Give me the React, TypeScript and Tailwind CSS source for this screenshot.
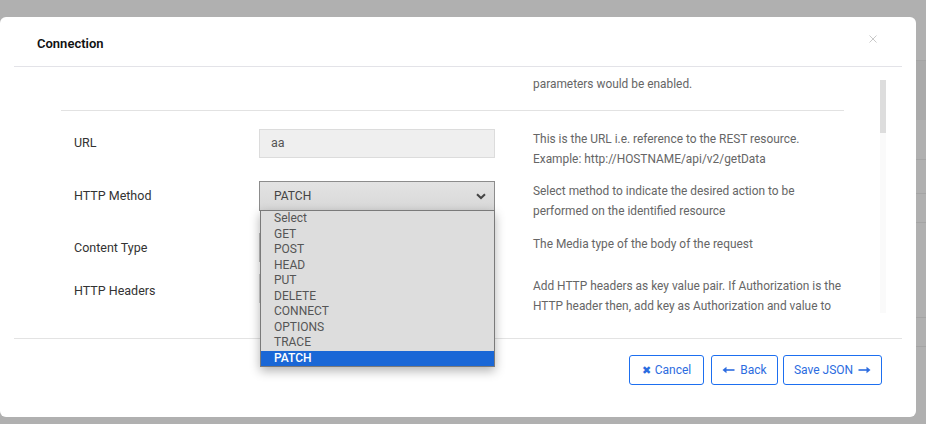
import React from 'react';

const methods = ['Select', 'GET', 'POST', 'HEAD', 'PUT', 'DELETE', 'CONNECT', 'OPTIONS', 'TRACE', 'PATCH'];

function Row({ label, control, desc, labelClass = '' }: { label: string; control: React.ReactNode; desc: React.ReactNode; labelClass?: string }) {
  return (
    <div className="flex items-start">
      <div className={`w-[198px] shrink-0 pl-[13px] text-[12.5px] leading-[27px] text-[#333] ${labelClass}`}>{label}</div>
      <div className="w-[236px] shrink-0">{control}</div>
      <div className="ml-[38px] flex-1 text-[11.9px] leading-[20px] text-[#666]">{desc}</div>
    </div>
  );
}

function Chevron() {
  return (
    <svg width="10" height="7" viewBox="0 0 10 7" className="text-[#444]">
      <path d="M1 1.2 L5 5 L9 1.2" fill="none" stroke="currentColor" strokeWidth="2" />
    </svg>
  );
}

function ArrowLeft() {
  return (
    <svg width="13" height="8" viewBox="0 0 13 8">
      <path d="M12.5 4 H3" stroke="currentColor" strokeWidth="1.6" />
      <path d="M0.5 4 L4.5 0.8 V7.2 Z" fill="currentColor" />
    </svg>
  );
}

function ArrowRight() {
  return (
    <svg width="13" height="8" viewBox="0 0 13 8">
      <path d="M0.5 4 H10" stroke="currentColor" strokeWidth="1.6" />
      <path d="M12.5 4 L8.5 0.8 V7.2 Z" fill="currentColor" />
    </svg>
  );
}

export default function App() {
  return (
    <div className="relative h-[424px] w-[926px] overflow-hidden bg-[#b0b0b0] font-['Roboto',sans-serif]">
      {/* page behind the backdrop */}
      <div className="flex flex-col">
        <div className="h-[61px] border-b border-[#a4a4a4]" />
        <div className="h-[59px] bg-[#aaaaaa]" />
        <div className="h-[40px] border-b border-[#a4a4a4]" />
        <div className="h-[34px] border-b border-[#a4a4a4]" />
        <div className="h-[29px] border-b border-[#a4a4a4]" />
        <div className="h-[95px] border-b border-[#a4a4a4]" />
        <div className="h-[29px] border-b border-[#a4a4a4]" />
      </div>

      {/* modal */}
      <div className="absolute left-0 top-[17px] flex h-[400px] w-[916px] flex-col rounded-[6px] bg-white">
        <div className="mx-[14px] flex h-[50px] shrink-0 items-start border-b border-[#e3e3e8] pl-[23px]">
          <h2 className="mt-[17px] text-[13px] font-semibold leading-[20px] text-[#111]">Connection</h2>
          <svg width="8" height="8" viewBox="0 0 8 8" className="ml-auto mr-[25px] mt-[18px]">
            <path d="M0.5 0.5 L7.5 7.5 M7.5 0.5 L0.5 7.5" stroke="#c9c9c9" strokeWidth="1" />
          </svg>
        </div>

        <div className="flex h-[271px] shrink-0 pl-[61px] pr-[30px] pt-[11px]">
          <div className="h-[235px] w-[783px] overflow-hidden">
            <p className="-mt-[4px] ml-[472px] text-[11.9px] leading-[20px] text-[#666]">parameters would be enabled.</p>
            <div className="mt-[16px] border-t border-[#e2e2e2]" />
            <div className="mt-[18px] flex flex-col gap-[12px]">
              <Row
                label="URL"
                control={
                  <div className="flex h-[29px] items-center border border-[#dcdcdc] bg-[#efefef] pl-[11px] text-[12.5px] text-[#555]">aa</div>
                }
                desc={
                  <>
                    This is the URL i.e. reference to the REST resource.
                    <br />
                    Example: http://HOSTNAME/api/v2/getData
                  </>
                }
              />
              <Row
                label="HTTP Method"
                labelClass="pt-[1px]"
                control={
                  <div className="flex h-[30px] items-center border border-[#8c8c8c] bg-gradient-to-b from-[#e3e3e3] to-[#d8d8d8] pl-[14px] pr-[8px] text-[12px] text-[#444]">
                    <span>PATCH</span>
                    <span className="ml-auto">
                      <Chevron />
                    </span>
                  </div>
                }
                desc={
                  <>
                    Select method to indicate the desired action to be
                    <br />
                    performed on the identified resource
                  </>
                }
              />
              <Row
                label="Content Type"
                labelClass="pt-[1px]"
                control={<div className="h-[29px] border border-[#bdbdbd] bg-[#f4f4f4]" />}
                desc={<div className="pt-[1px]">The Media type of the body of the request</div>}
              />
              <Row
                label="HTTP Headers"
                labelClass="pt-[3px]"
                control={<div className="h-[29px] border border-[#cfcfcf] bg-white" />}
                desc={
                  <div className="pt-[2px]">
                    Add HTTP headers as key value pair. If Authorization is the
                    <br />
                    HTTP header then, add key as Authorization and value to
                  </div>
                }
              />
            </div>
          </div>
          <div className="ml-auto mt-[2px] flex h-[233px] w-[6px] flex-col bg-[#fafafa]">
            <div className="h-[53px] bg-[#dddddd]" />
          </div>
        </div>

        <div className="mx-[14px] flex flex-1 items-start justify-end border-t border-[#e3e3e3] pr-[20px] pt-[16px]">
          <button className="flex h-[30px] w-[75px] items-center justify-center gap-[4px] rounded-[3px] border border-[#1d6ff0] text-[12px] text-[#2c6ce0]">
            <span className="text-[11px] leading-none">✖</span>Cancel
          </button>
          <button className="ml-[7px] flex h-[30px] w-[67px] items-center justify-center gap-[5px] rounded-[3px] border border-[#1d6ff0] text-[12px] text-[#2c6ce0]">
            <ArrowLeft />
            Back
          </button>
          <button className="ml-[5px] flex h-[30px] w-[99px] items-center justify-center gap-[5px] rounded-[3px] border border-[#1d6ff0] text-[12px] text-[#2c6ce0]">
            Save JSON
            <ArrowRight />
          </button>
        </div>

        {/* open select list */}
        <ul className="absolute left-[260px] top-[193px] z-10 w-[235px] border border-[#7a7a7a] bg-[#dddddd] shadow-[0_4px_10px_rgba(0,0,0,0.3)]">
          {methods.map((m) => (
            <li
              key={m}
              className={`h-[15.5px] pl-[13px] text-[12px] leading-[15.5px] ${m === 'PATCH' ? 'bg-[#1a67d6] font-medium text-white' : 'text-[#555]'}`}
            >
              {m}
            </li>
          ))}
        </ul>
      </div>
    </div>
  );
}
